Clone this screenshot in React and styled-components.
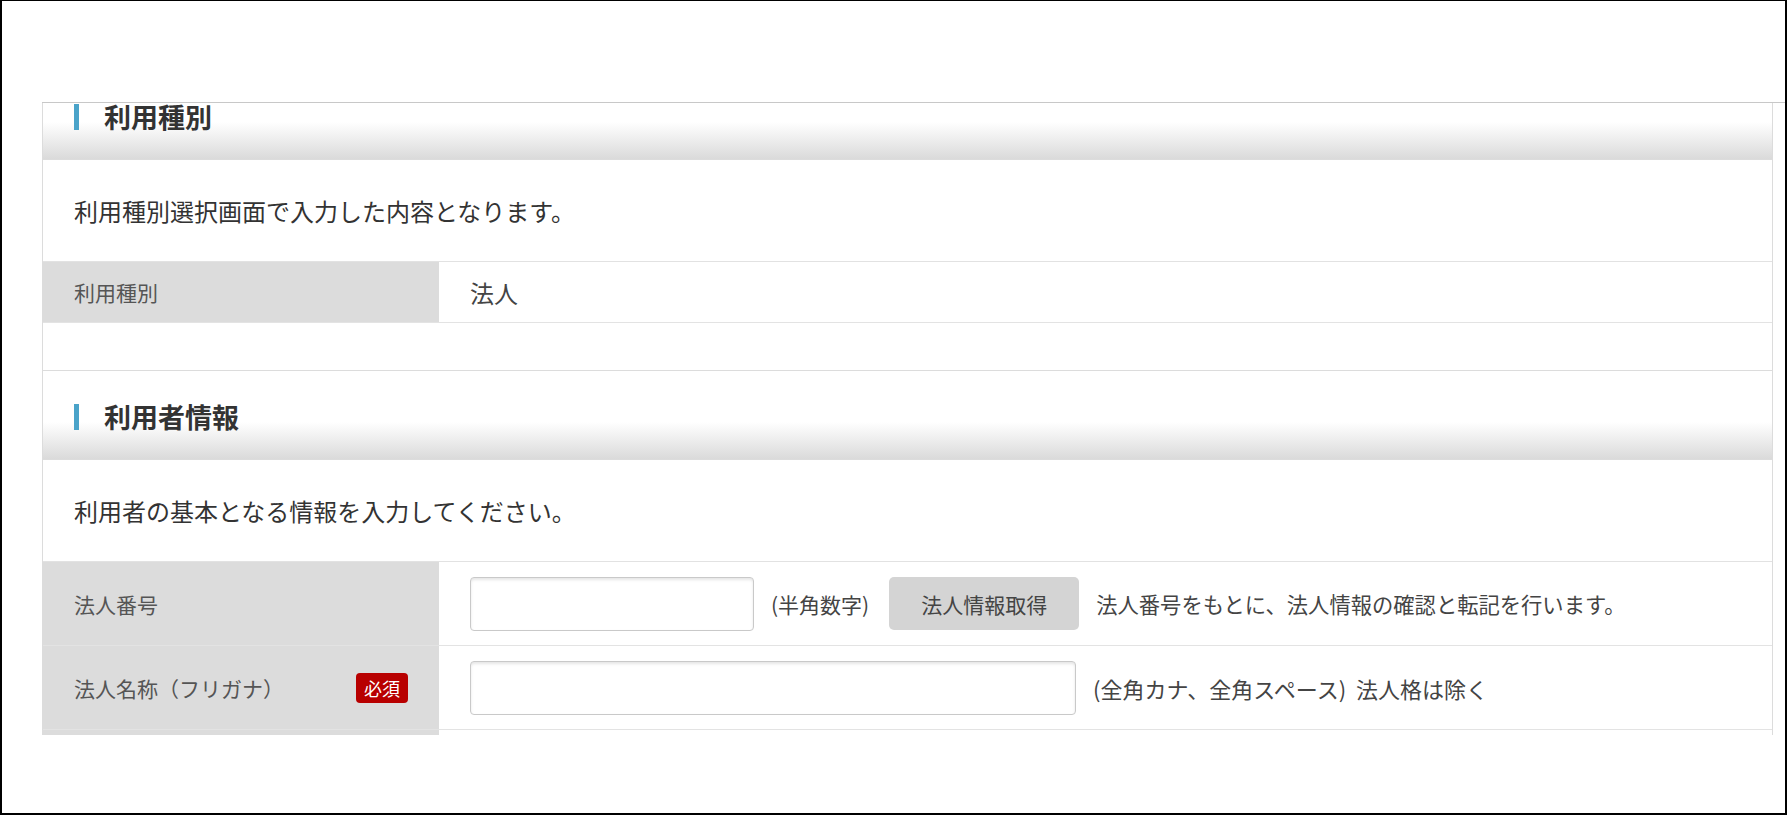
import React from "react";
import styled, { createGlobalStyle } from "styled-components";

//////////////////
// GLOBAL STYLE //
//////////////////
const GlobalStyle = createGlobalStyle`
  html, body {
    margin: 0;
    padding: 0;
    background: #fff;
  }
  body {
    font-family: "Noto Sans CJK JP", "Noto Sans", sans-serif;
    color: #333;
  }
`;

///////////////////
// PAGE / FRAME  //
///////////////////
const Frame = styled.div`
  width: 1787px;
  height: 815px;
  box-sizing: border-box;
  border-style: solid;
  border-color: #000;
  border-width: 1px 2px 2px 2px;
  padding-left: 40px;
  display: flex;
  flex-direction: column;
  overflow: hidden;
  background: #fff;
`;

const TopBar = styled.div`
  height: 101px;
  flex-shrink: 0;
  border-bottom: 1px solid #c8c8c8;
`;

// the scrolled form area, clipped like a scroll pane
const Viewport = styled.div`
  height: 632px;
  margin-right: 12px;
  overflow: hidden;
  border-left: 1px solid #dcdcdc;
  border-right: 1px solid #dcdcdc;
`;

const Sheet = styled.div`
  margin-top: -33px;
`;

/////////////
// SECTION //
/////////////
const Section = styled.section`
  border-top: 1px solid #dcdcdc;
  padding-bottom: ${(props) => props.spaceBelow || 0}px;
`;

const SectionHeader = styled.div`
  height: 89px;
  box-sizing: border-box;
  display: flex;
  align-items: center;
  padding: 3px 0 0 31px;
  background: linear-gradient(to bottom, #fff 0%, #fff 58%, #dadada 100%);
  border-bottom: 1px solid #dcdcdc;
`;

const HeaderBar = styled.span`
  width: 5px;
  height: 26px;
  background: #4aa3c9;
  margin-right: 25px;
`;

const HeaderTitle = styled.h2`
  margin: 0;
  font-size: 27px;
  line-height: 1;
  font-weight: 700;
  color: #333;
`;

const Description = styled.p`
  margin: 0;
  height: 101px;
  display: flex;
  align-items: center;
  padding-left: 31px;
  font-size: 24px;
  color: #333;
  border-bottom: 1px solid #e2e2e2;
`;

///////////
// TABLE //
///////////
const Row = styled.div`
  display: flex;
  min-height: ${(props) => props.height}px;
  border-bottom: 1px solid #e3e3e3;
`;

const LabelCell = styled.div`
  width: 396px;
  flex-shrink: 0;
  box-sizing: border-box;
  display: flex;
  align-items: center;
  justify-content: space-between;
  padding: 0 31px;
  background: #dcdcdc;
  font-size: 21px;
  color: #555;
`;

const ValueCell = styled.div`
  flex: 1;
  display: flex;
  align-items: center;
  gap: 17px;
  padding-left: 31px;
  font-size: ${(props) => (props.large ? 24 : 21)}px;
  color: #444;
`;

const Badge = styled.span`
  display: inline-block;
  height: 30px;
  line-height: 30px;
  padding: 0 8px;
  border-radius: 4px;
  background: #b80000;
  color: #fff;
  font-size: 18px;
`;

const TextInput = styled.input`
  width: ${(props) => props.w}px;
  height: 54px;
  box-sizing: border-box;
  border: 1px solid #c9c9c9;
  border-radius: 4px;
  box-shadow: inset 0 2px 3px rgba(0, 0, 0, 0.1);
  background: #fff;
  padding: 0 12px;
  font-size: 21px;
  font-family: inherit;
`;

const Note = styled.span`
  white-space: nowrap;
  font-size: ${(props) => props.size || 21}px;
`;

const FetchButton = styled.button`
  height: 53px;
  padding: 0 32px;
  margin-left: 3px;
  border: none;
  border-radius: 5px;
  background: #d4d4d4;
  color: #444;
  font-size: 21px;
  font-family: inherit;
`;

export default function App() {
  return (
    <>
      <GlobalStyle />
      <Frame>
        <TopBar />
        <Viewport>
          <Sheet>
            <Section spaceBelow={47}>
              <SectionHeader>
                <HeaderBar />
                <HeaderTitle>利用種別</HeaderTitle>
              </SectionHeader>
              <Description>利用種別選択画面で入力した内容となります。</Description>
              <Row height={60}>
                <LabelCell>利用種別</LabelCell>
                <ValueCell large>法人</ValueCell>
              </Row>
            </Section>

            <Section>
              <SectionHeader>
                <HeaderBar />
                <HeaderTitle>利用者情報</HeaderTitle>
              </SectionHeader>
              <Description>利用者の基本となる情報を入力してください。</Description>
              <Row height={83}>
                <LabelCell>法人番号</LabelCell>
                <ValueCell>
                  <TextInput w={284} />
                  <Note>(半角数字)</Note>
                  <FetchButton>法人情報取得</FetchButton>
                  <Note size={21.3}>法人番号をもとに、法人情報の確認と転記を行います。</Note>
                </ValueCell>
              </Row>
              <Row height={83}>
                <LabelCell>
                  法人名称（フリガナ）
                  <Badge>必須</Badge>
                </LabelCell>
                <ValueCell>
                  <TextInput w={606} />
                  <Note size={22}>(全角カナ、全角スペース)&nbsp;&nbsp;法人格は除く</Note>
                </ValueCell>
              </Row>
              <Row height={83}>
                <LabelCell />
                <ValueCell />
              </Row>
            </Section>
          </Sheet>
        </Viewport>
      </Frame>
    </>
  );
}
